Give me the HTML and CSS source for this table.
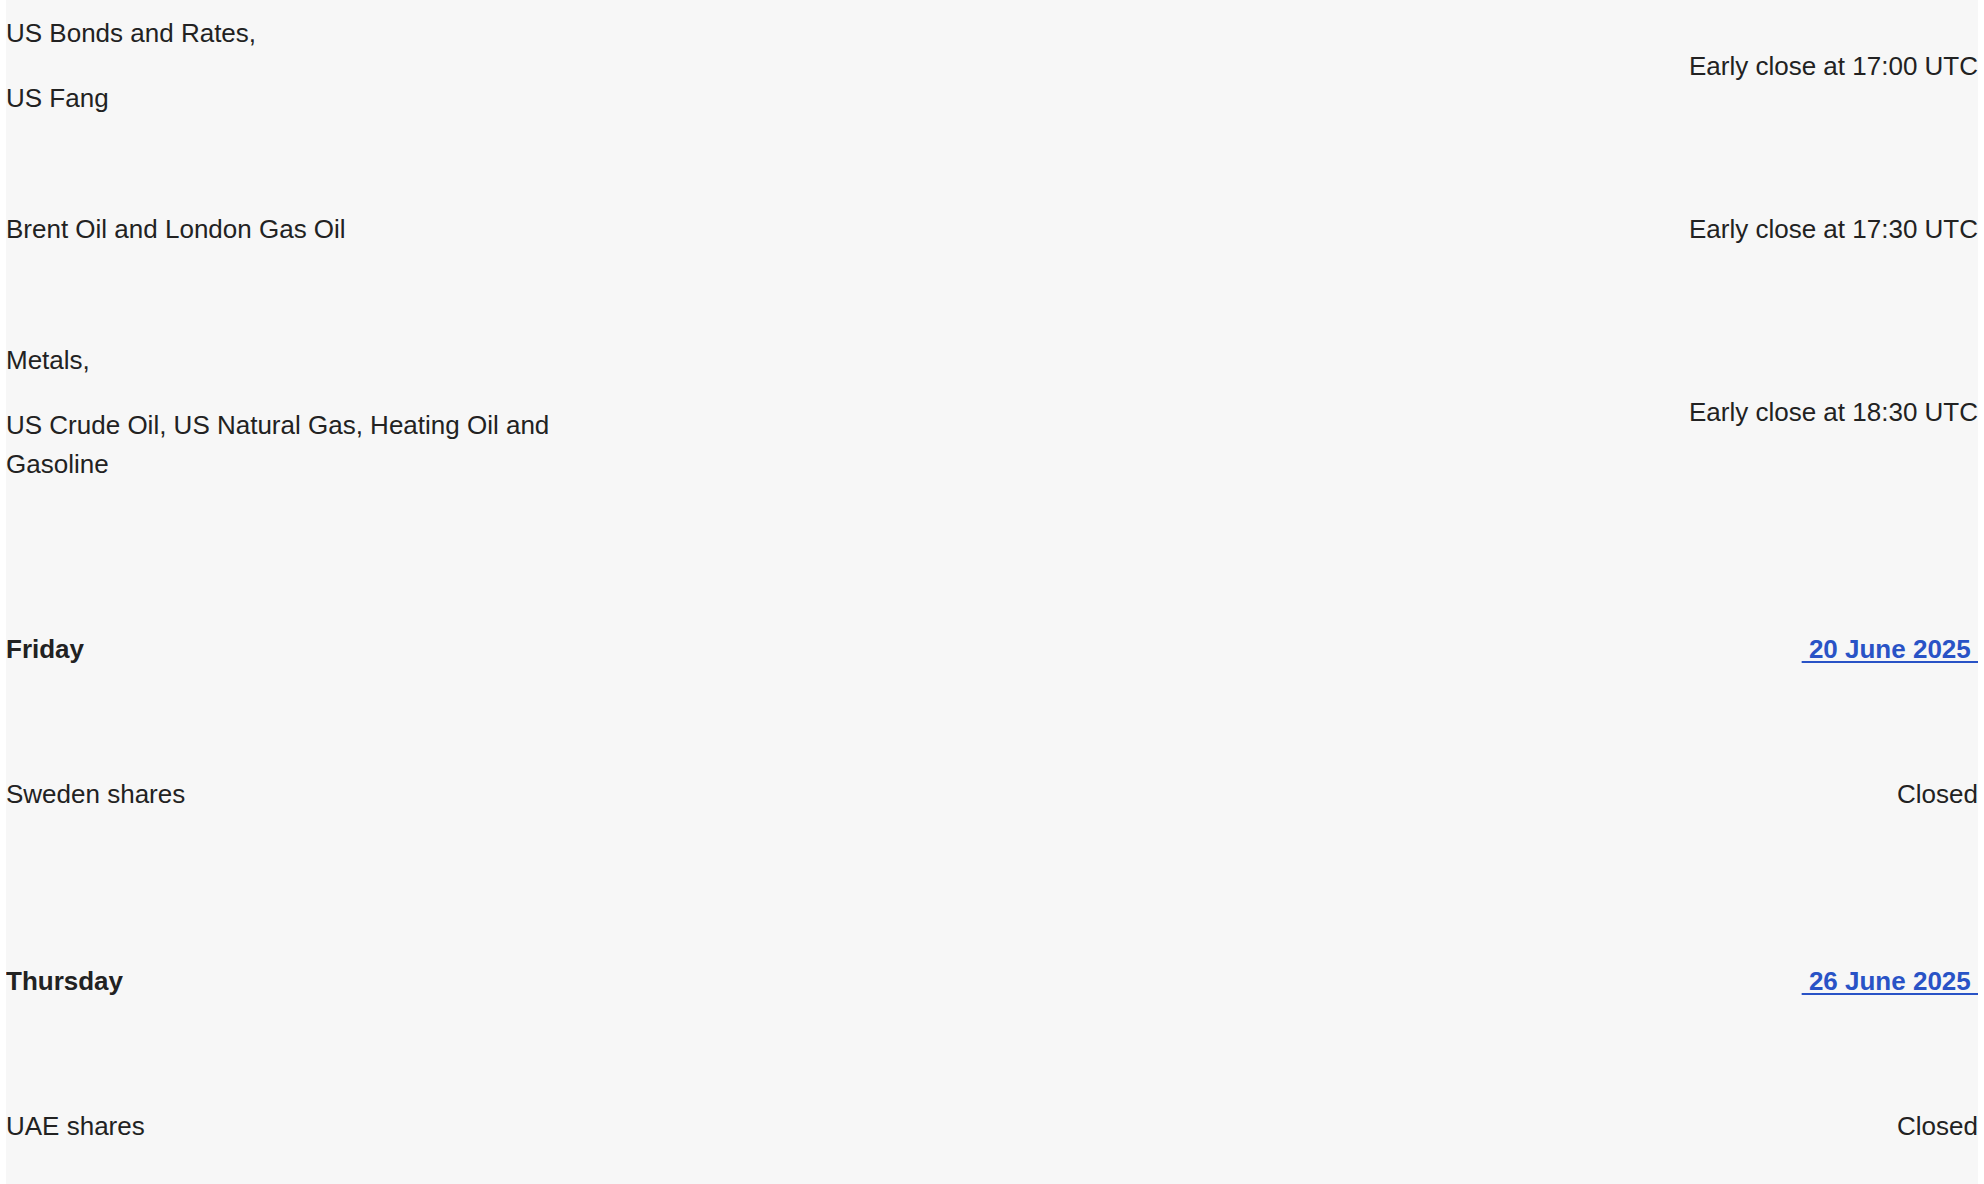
FILE: index.html
```html
<!DOCTYPE html>
<html lang="en">
<head>
    <meta charset="UTF-8" />
    <title>Trading Hours - Holiday Schedule</title>
    <link rel="stylesheet" href="styles.css">
</head>
<body>

<div class="page">
  <div class="schedule">

    <div class="row">
      <div class="markets">
        <p>US Bonds and Rates,</p>
        <p>US Fang</p>
      </div>
      <div class="status"><p>Early close at 17:00 UTC</p></div>
    </div>

    <div class="row">
      <div class="markets">
        <p>Brent Oil and London Gas Oil</p>
      </div>
      <div class="status"><p>Early close at 17:30 UTC</p></div>
    </div>

    <div class="row">
      <div class="markets">
        <p>Metals,</p>
        <p>US Crude Oil, US Natural Gas, Heating Oil and Gasoline</p>
      </div>
      <div class="status"><p>Early close at 18:30 UTC</p></div>
    </div>

    <div class="day-header">
      <span class="day">Friday</span>
      <a href="#" class="date">&nbsp;20 June 2025&nbsp;</a>
    </div>

    <div class="row">
      <div class="markets">
        <p>Sweden shares</p>
      </div>
      <div class="status"><p>Closed</p></div>
    </div>

    <div class="day-header">
      <span class="day">Thursday</span>
      <a href="#" class="date">&nbsp;26 June 2025&nbsp;</a>
    </div>

    <div class="row">
      <div class="markets">
        <p>UAE shares</p>
      </div>
      <div class="status"><p>Closed</p></div>
    </div>

  </div>
</div>

</body>
</html>
```

FILE: styles.css
```css
html, body {
  margin: 0;
  background-color: white;
  height: 100%;
}

body {
  font-family: "Liberation Sans", Arial, sans-serif;
  font-size: 26px;
  line-height: 1.5;
  color: #222;
}

.page {
  margin: 0 6px;
  background-color: #f7f7f7;
  min-height: 100%;
  overflow: hidden;
}

/* page is shown scrolled a little past the top of the list */
.schedule {
  margin-top: -32px;
}

.row {
  display: grid;
  grid-template-columns: 600px 1fr;
  align-items: center;
  padding: 20px 0;
}

.row p {
  margin: 26px 0;
}

.status {
  text-align: right;
}

.day-header {
  display: flex;
  justify-content: space-between;
  padding: 100px 0 60px;
  font-weight: bold;
}

.row + .day-header + .row + .day-header {
  padding-top: 102px;
}

.date {
  color: #2953c6;
  text-decoration: underline;
  text-decoration-thickness: 2px;
  text-underline-offset: 3px;
}
```
